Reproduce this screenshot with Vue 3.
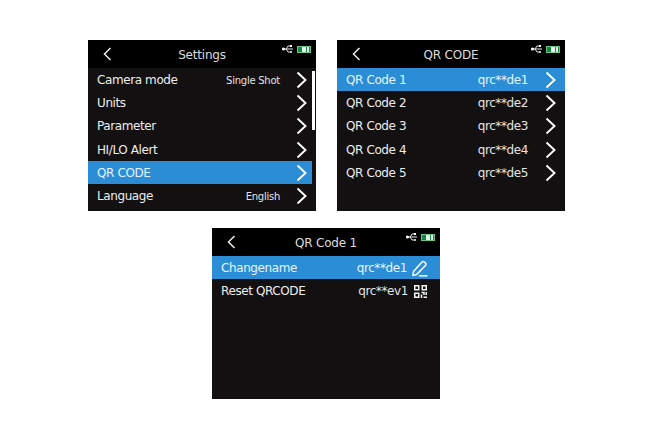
<template>
  <div class="page">
    <div class="top-row">
      <section v-for="screen in topScreens" :key="screen.title" class="screen">
        <header class="screen-head">
          <svg class="back" width="9" height="14" viewBox="0 0 9 14"><path d="M7.5 1 L1.5 7 L7.5 13" /></svg>
          <span class="title">{{ screen.title }}</span>
          <span class="status">
            <svg width="12" height="8" viewBox="0 0 12 8"><path d="M0 4h11M4 4l2-3h2M4 4l2 3h2" fill="none" stroke="#e8e8e8" stroke-width="1" /><circle cx="1.5" cy="4" r="1.5" fill="#fff" /><rect x="8" y="0" width="2" height="2" fill="#fff" /><circle cx="9" cy="7" r="1" fill="#fff" /></svg>
            <span class="battery"><i></i><b></b></span>
          </span>
        </header>
        <ul class="rows" :class="{ 'with-track': screen.scrollbar }">
          <li v-for="row in screen.rows" :key="row.label" class="row" :class="{ active: row.active }">
            <span class="label">{{ row.label }}</span>
            <span class="value" :class="{ small: screen.smallValues }">{{ row.value }}</span>
            <svg class="chev" width="12" height="20" viewBox="0 0 12 20"><path d="M2.5 2.5 L10.5 10 L2.5 17.5" /></svg>
          </li>
        </ul>
        <div v-if="screen.scrollbar" class="scrollbar"></div>
      </section>
    </div>

    <section class="screen last">
      <header class="screen-head">
        <svg class="back" width="9" height="14" viewBox="0 0 9 14"><path d="M7.5 1 L1.5 7 L7.5 13" /></svg>
        <span class="title">QR Code 1</span>
        <span class="status">
          <svg width="12" height="8" viewBox="0 0 12 8"><path d="M0 4h11M4 4l2-3h2M4 4l2 3h2" fill="none" stroke="#e8e8e8" stroke-width="1" /><circle cx="1.5" cy="4" r="1.5" fill="#fff" /><rect x="8" y="0" width="2" height="2" fill="#fff" /><circle cx="9" cy="7" r="1" fill="#fff" /></svg>
          <span class="battery"><i></i><b></b></span>
        </span>
      </header>
      <ul class="rows">
        <li class="row active">
          <span class="label">Changename</span>
          <span class="value tool-value">qrc**de1</span>
          <svg class="tool" width="16" height="17" viewBox="0 0 16 17" fill="none" stroke="#fff" stroke-width="1.5">
            <path d="M1.5 11.5 L10 2 Q11.2 0.9 12.4 2 L13.4 3 Q14.4 4.2 13.4 5.4 L4.6 14.6 L1 15.4 Z" />
            <path d="M7 15.8 H15.5" />
          </svg>
        </li>
        <li class="row">
          <span class="label">Reset QRCODE</span>
          <span class="value tool-value">qrc**ev1</span>
          <svg class="tool qr" width="13" height="13" viewBox="0 0 13 13" fill="none" stroke="#f4f4f4" stroke-width="1.5">
            <rect x="0.75" y="0.75" width="4" height="4" />
            <rect x="8.25" y="0.75" width="4" height="4" />
            <rect x="0.75" y="8.25" width="4" height="4" />
            <path d="M7.5 7.5 H10 V10 M12.25 7 V10 M7.5 9.5 V13 M9.5 12.25 H13" />
          </svg>
        </li>
      </ul>
    </section>
  </div>
</template>

<script setup>
const qrRows = [1, 2, 3, 4, 5].map((n) => ({
  label: `QR Code ${n}`,
  value: `qrc**de${n}`,
  active: n === 1
}))

const topScreens = [
  {
    title: 'Settings',
    scrollbar: true,
    smallValues: true,
    rows: [
      { label: 'Camera mode', value: 'Single Shot' },
      { label: 'Units', value: '' },
      { label: 'Parameter', value: '' },
      { label: 'HI/LO Alert', value: '' },
      { label: 'QR CODE', value: '', active: true },
      { label: 'Language', value: 'English' }
    ]
  },
  { title: 'QR CODE', rows: qrRows }
]
</script>

<style>
html, body {
  margin: 0;
  background: #fff;
}
</style>

<style scoped>
.page {
  width: 477px;
  margin-left: 88px;
  padding-top: 40px;
  display: flex;
  flex-direction: column;
  align-items: center;
  gap: 17px;
  font-family: "DejaVu Sans", sans-serif;
}

.top-row {
  display: flex;
  gap: 21px;
}

.screen {
  position: relative;
  width: 228px;
  height: 171px;
  background: #131011;
  color: #eeeeee;
}

.screen.last {
  margin-right: 1px;
}

.screen-head {
  position: relative;
  height: 28px;
  background: #000;
  display: flex;
  align-items: center;
  justify-content: center;
}

.back {
  position: absolute;
  left: 15px;
  top: 7px;
}

.back path {
  fill: none;
  stroke: #eee;
  stroke-width: 1.5;
}

.title {
  font-size: 12px;
  letter-spacing: -0.2px;
  color: #dcdcdc;
  padding-top: 1px;
}

.status {
  position: absolute;
  right: 5px;
  top: 5px;
  display: flex;
  align-items: center;
  gap: 3px;
}

.battery {
  width: 14px;
  height: 7px;
  box-sizing: border-box;
  border: 1px solid #6fc48a;
  background: #16873f;
  display: flex;
  justify-content: flex-end;
  padding-right: 1px;
}

.battery i {
  width: 4px;
  margin-right: 1px;
  background: #e8f5ec;
}

.battery b {
  width: 2px;
  background: #e8f5ec;
}

.rows {
  list-style: none;
  margin: 0;
  padding: 0;
}

.row {
  height: 23.2px;
  box-sizing: border-box;
  padding: 1px 9px 0 9px;
  display: flex;
  align-items: center;
  font-size: 12px;
  letter-spacing: -0.4px;
}

.rows.with-track .row {
  margin-right: 4px;
  padding-right: 5px;
}

.row.active {
  background: #2b8dd5;
  color: #e6f4ff;
}

.label {
  flex: 1;
}

.value {
  margin-right: 16px;
  color: #e4e4e4;
}

.value.small {
  font-size: 10px;
  letter-spacing: -0.25px;
  margin-right: 15px;
}

.value.tool-value {
  margin-right: 5px;
}

.row.active .value {
  color: #e6f4ff;
}

.chev path {
  fill: none;
  stroke: #fff;
  stroke-width: 1.9;
}

.tool {
  flex: none;
}

.tool.qr {
  margin: 0 1px 0 1px;
}

.row:has(.tool) {
  padding-right: 12px;
}

.scrollbar {
  position: absolute;
  right: 1px;
  top: 31px;
  width: 3px;
  height: 59px;
  background: #fff;
}
</style>
